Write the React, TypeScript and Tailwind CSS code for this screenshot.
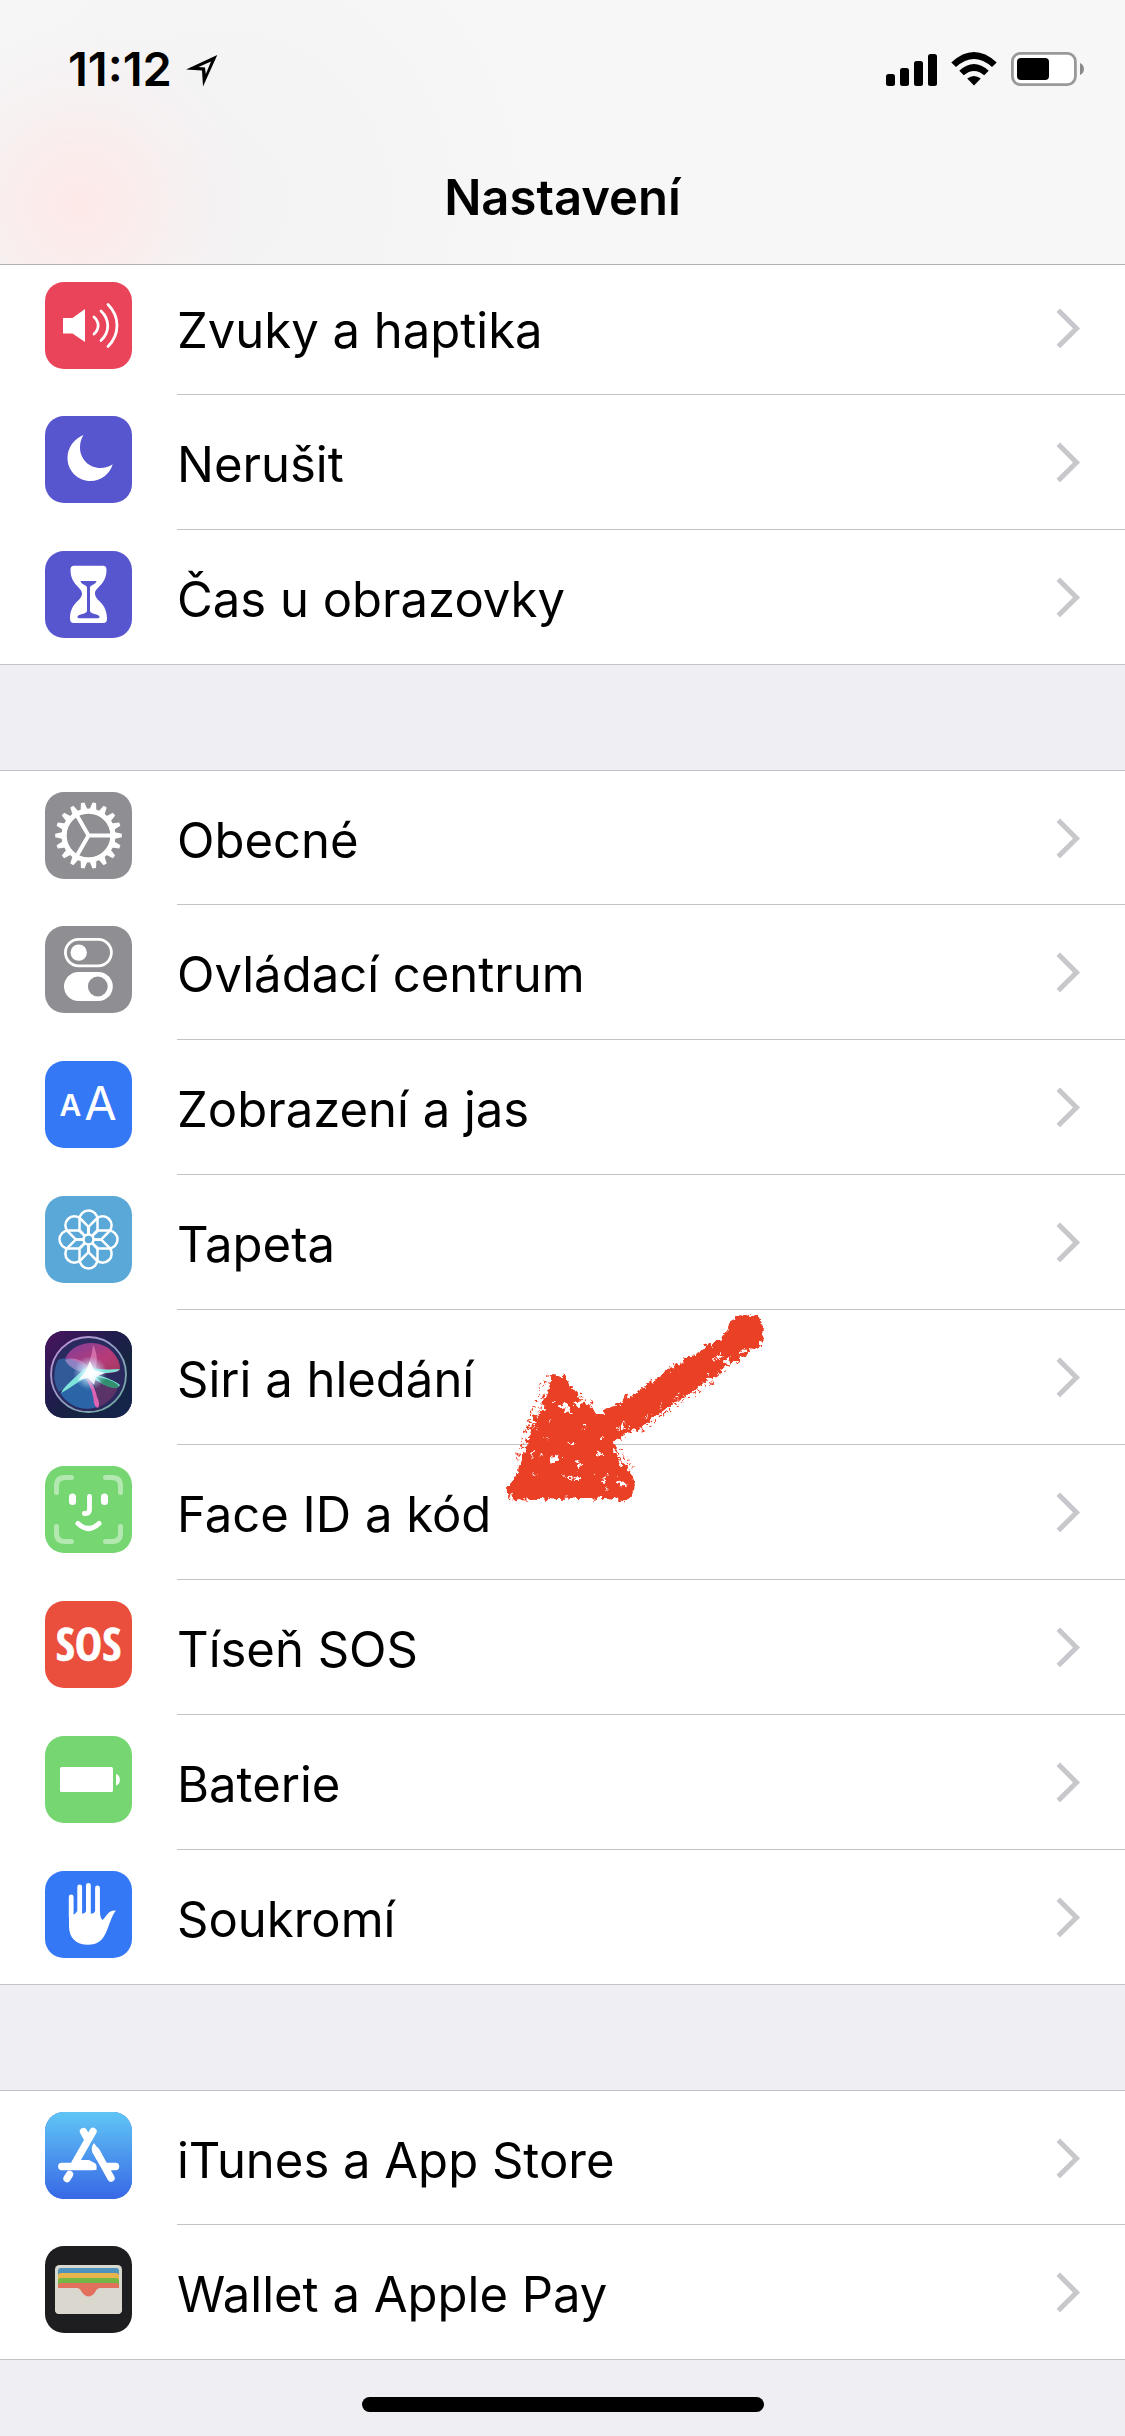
import type { ReactNode } from "react";

interface SettingsItem {
  id: string;
  label: string;
  tile: string;
  icon: ReactNode;
  marked?: boolean;
}

const GEAR_TEETH = Array.from({ length: 18 }, (_, i) => i * 20);
const PETALS = [0, 45, 90, 135, 180, 225, 270, 315];

function SoundIcon() {
  return (
    <g fill="none" stroke="#fff" strokeWidth="2.8" strokeLinecap="round">
      <path d="M18 36h9.5L40 27v33L27.5 51.5H18z" fill="#fff" stroke="none" />
      <path d="M49 35c5.500 5 5.500 12 0 17" />
      <path d="M56 29c9 8.500 9 21 0 29.500" />
      <path d="M63 22.500c12 12 12 30 0 42" />
    </g>
  );
}

function MoonIcon() {
  return (
    <path
      fill="#fff"
      d="M38.500 19C28.500 23 22.500 32 22.500 42 22.500 55 33 65 45.500 65c10.500 0 19.500-7 22.200-16.700C64 51 60 52 55.500 52 44 52 35 43 35 31.500c0-4.500 1-8.500 3.500-12.500z"
    />
  );
}

function HourglassIcon() {
  return (
    <>
      <path
        fill="#fff"
        d="M29 14.700h29c2.500 0 3.500 1.500 3.500 4C61.500 34 50 36 50 42.500c0 7.500 12 9 12 25 0 3-1 4.500-4 4.500H29c-3 0-4-1.500-4-4.500 0-16 12-17.500 12-25C37 36 25.500 34 25.500 18.700c0-2.500 1-4 3.500-4z"
      />
      <path
        fill="#5856ce"
        d="M35.500 30h16c-.5 3.500-6.500 4-6.500 6.500V60c0 3 9 3 9.500 5.500.2 1.200-.5 1.700-1.500 1.700H34c-1 0-1.700-.5-1.500-1.700C33 63 42 63 42 60V36.500c0-2.500-6-3-6.500-6.500z"
      />
    </>
  );
}

function GearIcon() {
  return (
    <g transform="translate(43.5 43.5)">
      {GEAR_TEETH.map((angle) => (
        <path key={angle} d="M25.500-3.500 33.300-1.800v3.600L25.500 3.500z" fill="#fff" transform={`rotate(${angle})`} />
      ))}
      <g fill="none" stroke="#fff">
        <circle r="24.4" strokeWidth="5.2" />
        <path d="M0 0h23M0 0l-11.500 20M0 0l-11.500-20" strokeWidth="4" />
      </g>
    </g>
  );
}

function TogglesIcon() {
  return (
    <>
      <rect x="20.4" y="13.4" width="46" height="26.4" rx="13.2" fill="none" stroke="#fff" strokeWidth="2.8" />
      <circle cx="33.7" cy="26.6" r="8.2" fill="#fff" />
      <rect x="19" y="46" width="48.8" height="29" rx="14.5" fill="#fff" />
      <circle cx="52.8" cy="60.5" r="9.9" fill="#8e8e93" />
    </>
  );
}

function TextSizeIcon() {
  return (
    <g fill="#fff" fontFamily="Inter, sans-serif" textAnchor="middle">
      <text x="25.5" y="55" fontSize="30" fontWeight="600">A</text>
      <text x="55.5" y="59" fontSize="47" fontWeight="400">A</text>
    </g>
  );
}

function FlowerIcon() {
  return (
    <g transform="translate(43.5 43.5)" fill="none" stroke="#fff" strokeWidth="2.5">
      {PETALS.map((angle) => (
        <path key={angle} transform={`rotate(${angle})`} d="M-3.700-3.700-9-9.500V-20a9 9 0 0 1 18 0v10.500L3.700-3.700" />
      ))}
      <circle r="5" />
    </g>
  );
}

function SiriIcon() {
  return (
    <>
      <defs>
        <linearGradient id="siri-bg" x1="0" y1="0" x2="1" y2="1">
          <stop offset="0" stopColor="#4a145f" />
          <stop offset="0.4" stopColor="#221c4e" />
          <stop offset="0.65" stopColor="#15243f" />
          <stop offset="1" stopColor="#142450" />
        </linearGradient>
        <linearGradient id="siri-ring" x1="0" y1="0" x2="1" y2="1">
          <stop offset="0" stopColor="#c88fd6" />
          <stop offset="0.5" stopColor="#8f9fc4" />
          <stop offset="1" stopColor="#6fae9d" />
        </linearGradient>
        <linearGradient id="siri-pink" x1="0" y1="0" x2="1" y2="1">
          <stop offset="0" stopColor="#7d3f9c" />
          <stop offset="0.6" stopColor="#b83a78" />
          <stop offset="1" stopColor="#a03a5e" />
        </linearGradient>
        <radialGradient id="siri-glow">
          <stop offset="0" stopColor="#fff" />
          <stop offset="0.35" stopColor="#d8f4ff" stopOpacity="0.8" />
          <stop offset="1" stopColor="#a6d8ff" stopOpacity="0" />
        </radialGradient>
      </defs>
      <rect width="87" height="87" fill="url(#siri-bg)" />
      <circle cx="43.5" cy="43.5" r="37.5" fill="#2a2a5e" stroke="url(#siri-ring)" strokeWidth="1.8" />
      <path d="M20 28C28 9 58 6 70 24c5 7 6 13 4 16-9 3-18 3-27 2C36 40 24 36 20 28z" fill="url(#siri-pink)" />
      <path d="M13 29c8-4 21 0 30 12-10 9-20 15-29 20-6-9-6-22-1-32z" fill="#3565a6" opacity="0.8" />
      <path d="M15 62c10-5 20-13 29-18 4 9 8 20 8 32-14 5-29-1-37-14z" fill="#2c70b4" opacity="0.85" />
      <path d="M48 45c10 2 20 6 25 12-4 9-11 16-20 19-1-10-3-20-5-31z" fill="#5a3468" />
      <path d="M20 29c11-5 23 3 26 13-10 0-22-4-26-13z" fill="#c2a0df" opacity="0.55" />
      <path d="M48 14c5 9 5 19 1 28l-11-1c6-7 9-16 10-27z" fill="#ef8fc4" opacity="0.6" />
      <path
        d="M39 38c7-3 15 2 36 0-3 5-17 3-25 6 8 1 19 5 25 10-2 5-12 2-19-2-9-5-12-6-17-4-8 4-15 10-23 14 3-7 15-16 23-24z"
        fill="#7ce4d8"
      />
      <path d="M52 46c8 1 18 4 22 9-3 4-12 1-18-3z" fill="#318f70" />
      <path d="M41 46c6 4 10 13 11 20 2 4 3 8 1 11-5-1-4-8-5-12-1-7-5-12-7-19z" fill="#dc62b2" />
      <circle cx="45" cy="42" r="17" fill="url(#siri-glow)" />
      <path d="M45 30l4 9 11 3-9 4-2 8-6-7-10 2 7-8z" fill="#fff" opacity="0.85" />
    </>
  );
}

function FaceIcon() {
  return (
    <g fill="none" stroke="#fff" strokeLinecap="round">
      <path
        strokeWidth="5"
        opacity="0.45"
        d="M11.500 26.500V20q0-8.500 8.500-8.500h6.500M60.500 11.500H67q8.500 0 8.500 8.500v6.500M75.500 60.500V67q0 8.500-8.500 8.500h-6.500M26.500 75.500H20q-8.500 0-8.500-8.500v-6.500"
      />
      <path strokeWidth="7" d="M27.500 31v4.500M59.500 31v4.500" />
      <path strokeWidth="4.8" d="M44.500 30.500v13q0 4-4 4h-1.200" />
      <path strokeWidth="5" d="M33 57.500q10.500 10 21 0" />
    </g>
  );
}

function SosIcon() {
  return (
    <text
      x="43.5"
      y="60"
      fill="#fff"
      stroke="#fff"
      strokeWidth="0.6"
      fontSize="46"
      fontWeight="700"
      textAnchor="middle"
      fontFamily="'Liberation Sans Narrow', 'Open Sans Condensed', Roboto, sans-serif"
    >
      SOS
    </text>
  );
}

function BatteryIcon() {
  return (
    <g fill="#fff">
      <rect x="15" y="31" width="53" height="25" rx="1.5" />
      <path d="M71 38c5.200 1 5.200 10.500 0 11.500z" />
    </g>
  );
}

function HandIcon() {
  return (
    <g fill="#fff">
      <path
        d="M26.200 26v20M34.700 16v30M43.400 14.300v32M52.500 17v29"
        stroke="#fff"
        strokeWidth="4.800"
        strokeLinecap="round"
      />
      <path d="M24 40c2 5 5.500 5 8 0 1 3.500 8.500 3.500 9 0 1 3.500 8.500 3.500 9 0h5c0 4 .5 7.500 2.500 9 4-3 5-10 13.500-9.500-4.500 5-6.500 14.500-10 22-3.500 8-8.500 12.200-18 12.200-12 0-19-6.700-19-18.700z" />
    </g>
  );
}

function AppStoreIcon() {
  return (
    <>
      <defs>
        <linearGradient id="store-bg" x1="0" y1="0" x2="0" y2="1">
          <stop offset="0" stopColor="#60c6f5" />
          <stop offset="1" stopColor="#3868e6" />
        </linearGradient>
      </defs>
      <rect width="87" height="87" fill="url(#store-bg)" />
      <g fill="none" stroke="#fff" strokeWidth="7.4" strokeLinecap="round">
        <path d="M38.500 19.500l3 5.500M48 19.500 30 51M51 39l15 27M24.500 62.500 22 66.500" />
        <path d="M16.800 54.500h31M61 54.500h9.500" />
      </g>
      <path d="M49 31c-3 4-2.500 7-1.200 10L52 48l5-6z" fill="#fff" />
      <path d="M29 48h15l5.500 3c2 2.500 2 4.500 2 7H29z" fill="#fff" />
    </>
  );
}

function WalletIcon() {
  return (
    <>
      <rect x="10" y="19" width="67" height="49" rx="4.5" fill="#d7d8ce" />
      <path d="M13 42V25q0-3 3-3h55q3 0 3 3v17z" fill="#4f93bd" />
      <path d="M13 42V30q0-3 3-3h55q3 0 3 3v12z" fill="#e9b44b" />
      <path d="M13 42v-7q0-3 3-3h55q3 0 3 3v7z" fill="#77b645" />
      <path d="M13 43v-3q0-3 3-3h55q3 0 3 3v3L54 52H33z" fill="#e2705d" />
      <path
        d="M10 42h21c4.500 0 4.500 2.500 6.500 5 3.500 4.500 8.500 4.500 12 0 2-2.500 2-5 6.500-5h21v21.500q0 4.500-4.500 4.500h-58q-4.500 0-4.500-4.500z"
        fill="#dad7cf"
      />
    </>
  );
}

const GROUPS: SettingsItem[][] = [
  [
    { id: "zvuky", label: "Zvuky a haptika", tile: "bg-[#ea445a]", icon: <SoundIcon /> },
    { id: "nerusit", label: "Nerušit", tile: "bg-[#5856ce]", icon: <MoonIcon /> },
    { id: "cas", label: "Čas u obrazovky", tile: "bg-[#5856ce]", icon: <HourglassIcon /> },
  ],
  [
    { id: "obecne", label: "Obecné", tile: "bg-[#8e8e93]", icon: <GearIcon /> },
    { id: "ovladani", label: "Ovládací centrum", tile: "bg-[#8e8e93]", icon: <TogglesIcon /> },
    { id: "zobrazeni", label: "Zobrazení a jas", tile: "bg-[#3478f6]", icon: <TextSizeIcon /> },
    { id: "tapeta", label: "Tapeta", tile: "bg-[#5aa8d8]", icon: <FlowerIcon /> },
    { id: "siri", label: "Siri a hledání", tile: "bg-[#221c4e]", icon: <SiriIcon /> },
    { id: "faceid", label: "Face ID a kód", tile: "bg-[#76d672]", icon: <FaceIcon />, marked: true },
    { id: "sos", label: "Tíseň SOS", tile: "bg-[#ea4e3d]", icon: <SosIcon /> },
    { id: "baterie", label: "Baterie", tile: "bg-[#76d672]", icon: <BatteryIcon /> },
    { id: "soukromi", label: "Soukromí", tile: "bg-[#3478f6]", icon: <HandIcon /> },
  ],
  [
    { id: "itunes", label: "iTunes a App Store", tile: "bg-[#3868e6]", icon: <AppStoreIcon /> },
    { id: "wallet", label: "Wallet a Apple Pay", tile: "bg-[#1e1e20]", icon: <WalletIcon /> },
  ],
];

function StatusBar() {
  return (
    <div className="flex h-[138px] items-center justify-between pr-[41px] pl-[68px]">
      <div className="flex items-center gap-3.5">
        <span className="text-[47px] font-semibold">11:12</span>
        <svg width="32" height="32" viewBox="0 0 32 32" className="mt-1" aria-hidden="true">
          <path fillRule="evenodd" d="M31.300 0 17 31.500 16 15.500 0 14.500zM25 6.500 12.500 12l6.500.5.800 6.500z" />
        </svg>
      </div>
      <div className="flex items-center gap-3.5">
        <svg width="51" height="33" viewBox="0 0 51 33" aria-label="Signál">
          <rect y="21" width="9" height="12" rx="2.5" />
          <rect x="14" y="15" width="9" height="18" rx="2.5" />
          <rect x="28" y="8" width="9" height="25" rx="2.5" />
          <rect x="42" y="1" width="9" height="32" rx="2.5" />
        </svg>
        <svg width="46" height="34" viewBox="0 0 46 34" aria-label="Wi-Fi">
          <path d="M23 33.500 16.200 26.600q6.800-5.200 13.600 0z" />
          <path d="M8.300 18.700q14.700-13.400 29.400 0l-4.500 4.500q-10.200-8.600-20.400 0z" />
          <path d="M.3 10.500q22.700-20.800 45.400 0L41 15.100q-18-16-36 0z" />
        </svg>
        <svg width="73" height="34" viewBox="0 0 73 34" aria-label="Baterie telefonu">
          <rect x="1.4" y="1.4" width="63" height="31.2" rx="8" fill="#fff" stroke="#999" strokeWidth="2.8" />
          <rect x="6" y="6" width="32" height="22" rx="4" />
          <path d="M69 11c5.300 2 5.300 10 0 12z" fill="#8a8a8a" />
        </svg>
      </div>
    </div>
  );
}

// hand-drawn crayon arrow pointing at a row
function CrayonArrow() {
  return (
    <svg
      className="pointer-events-none absolute -top-[136px] left-[500px] z-10"
      width="280"
      height="200"
      viewBox="0 0 280 200"
      aria-hidden="true"
    >
      <defs>
        <filter id="crayon" x="-5%" y="-5%" width="110%" height="110%">
          <feTurbulence type="turbulence" baseFrequency="0.12" numOctaves="3" seed="4" result="noise" />
          <feDisplacementMap in="SourceGraphic" in2="noise" scale="10" xChannelSelector="R" yChannelSelector="G" />
        </filter>
      </defs>
      <g filter="url(#crayon)" transform="translate(-4 -3)">
        <path
          fill="#ea4025"
          fillRule="evenodd"
          d="M54 66 64 67 80 89 94 101 100 108 142 81 184 53 226 29 230 15 246 6 260 8 264 22 267 31 256 42 235 56 207 74 182 90 162 104 142 121 113 134 120 148 130 160 136 176 134 188 126 192 84 190 40 192 15 191 8 180 18 165 26 142 34 120 40 102 48 84z
             M58 96l11 1 4 8-7-2zM77 94l7-2 1 6-7 1zM51 148l7-1 3 7-5 2zM78 155l3-3 2 8-4 2zM118 171l9 3 1 5-7-1zM104 170l4-4 1 7-6 1zM98 145l6-1v2l-6 1zM33 146l3-6 1 7-3 3zM40 104l4-10 2 6-5 9zM30 120l5-5 2 5-5 3zM118 150l4 1 2 7-4-2zM122 117l7-4-1 5-7 3zM216 51l6-5 3 2-7 6zM226 54l8-6-2 7-6 3zM240 43l9-3-7 6zM70 169l12-1v2l-12 1z"
        />
        <path
          fill="none"
          stroke="#fff"
          strokeWidth="1.4"
          strokeDasharray="2 17"
          d="M56 92 46 140 34 176M86 118 60 160 70 180M104 128 96 168 110 182M130 120 184 84 246 42"
        />
        <path
          fill="none"
          stroke="#ea4025"
          strokeWidth="2.5"
          strokeDasharray="2 5"
          d="M50 66 38 92 24 130 18 158M82 86 96 100M144 123 184 93 216 73M122 142 134 160"
        />
      </g>
    </svg>
  );
}

function SettingsRow({ item }: { item: SettingsItem }) {
  return (
    <li className="group relative h-[135px] border-[#c4c4c8] first:h-[134px] last:border-b">
      <a href={`#${item.id}`} className="flex h-full items-center gap-[45px] pl-[45px]">
        <span className={`mb-1.5 size-[87px] shrink-0 overflow-hidden rounded-[19px] ${item.tile}`}>
          <svg width="87" height="87" viewBox="0 0 87 87" aria-hidden="true">
            {item.icon}
          </svg>
        </span>
        <span className="flex h-full flex-1 items-center justify-between border-b border-[#c4c4c8] pr-11 group-last:border-b-0">
          <span className="pt-1.5 text-[49px] leading-[60px]">{item.label}</span>
          <svg width="25" height="40" viewBox="0 0 25 40" fill="none" stroke="#c7c7cc" strokeWidth="5" aria-hidden="true">
            <path d="M2.300 2.300 20.500 20.500 2.300 38.500" />
          </svg>
        </span>
      </a>
      {item.marked && <CrayonArrow />}
    </li>
  );
}

export default function App() {
  return (
    <div className="min-h-screen bg-[#efeef3] font-[Inter,'Liberation_Sans',sans-serif] text-black">
      <header className="relative z-20 border-b border-[#b2b2b4] bg-[#f7f7f8] bg-[radial-gradient(circle_at_78px_205px,#fde9e8_0,#fbebeacc_60px,#f9eeee80_110px,#f4f4f500_180px),radial-gradient(circle_at_220px_200px,#f3f3f4_0,#f4f4f5_140px,#f7f7f800_330px)]">
        <StatusBar />
        <div className="flex h-[126px] items-center justify-center pb-1.5">
          <h1 className="text-[49px] leading-[60px] font-semibold">Nastavení</h1>
        </div>
      </header>

      <main className="-mt-[5px] flex flex-col gap-[105px]">
        {GROUPS.map((items) => (
          <ul key={items[0].id} className="border-t border-[#c4c4c8] bg-white">
            {items.map((item) => (
              <SettingsRow key={item.id} item={item} />
            ))}
          </ul>
        ))}
      </main>

      <footer className="flex justify-center pt-[37px] pb-6">
        <div className="h-[15px] w-[402px] rounded-full bg-black" />
      </footer>
    </div>
  );
}
